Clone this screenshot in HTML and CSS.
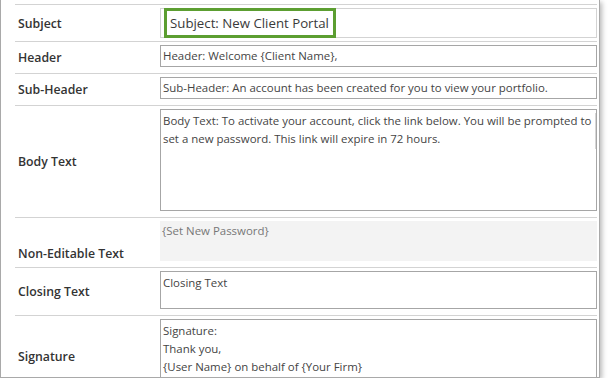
FILE: index.html
```html
<!DOCTYPE html>
<html lang="en">

<head>
	<meta charset="UTF-8">
	<title>Email Template</title>
	<link rel="stylesheet" href="styles.css">
</head>

<body>

	<div class="frame">
		<div class="form">
			<div class="row row-subject">
				<div class="label">Subject</div>
				<div class="field">
					<div class="box box-subject"><span class="highlight">Subject: New Client Portal</span></div>
				</div>
			</div>
			<div class="row">
				<div class="label">Header</div>
				<div class="field">
					<div class="box box-line">Header: Welcome {Client Name},</div>
				</div>
			</div>
			<div class="row">
				<div class="label">Sub-Header</div>
				<div class="field">
					<div class="box box-line">Sub-Header: An account has been created for you to view your portfolio.</div>
				</div>
			</div>
			<div class="row">
				<div class="label">Body Text</div>
				<div class="field">
					<div class="box box-body">Body Text: To activate your account, click the link below. You will be prompted to set a new password. This link will expire in 72 hours.<span class="scroll"></span></div>
				</div>
			</div>
			<div class="row">
				<div class="label label-bottom">Non-Editable Text</div>
				<div class="field">
					<div class="readonly">{Set New Password}</div>
				</div>
			</div>
			<div class="row">
				<div class="label">Closing Text</div>
				<div class="field">
					<div class="box box-closing">Closing Text</div>
				</div>
			</div>
			<div class="row">
				<div class="label">Signature</div>
				<div class="field">
					<div class="box box-signature">Signature:<br>Thank you,<br>{User Name} on behalf of {Your Firm}</div>
				</div>
			</div>
		</div>
	</div>

</body>

</html>
```

FILE: styles.css
```css
* {
	margin: 0;
	padding: 0;
	box-sizing: border-box;
}

body {
	background: #fff;
	font-family: "Open Sans", "Noto Sans", sans-serif;
	color: #444;
}

.frame {
	width: 600px;
	height: 378px;
	border: 1px solid #a9a9a9;
	border-top: none;
	box-shadow: 2px 2px 5px rgba(0, 0, 0, 0.28);
	overflow: hidden;
}

.form {
	margin: 4px 2px 0 14px;
}

.row {
	display: grid;
	grid-template-columns: 145px 1fr;
	border-top: 1px solid #d3d3d3;
}

.label {
	display: flex;
	align-items: center;
	padding-left: 3px;
	font-size: 12.3px;
	font-weight: 600;
	color: #333;
}

.label-bottom {
	align-items: flex-end;
	padding-bottom: 5px;
}

.field {
	padding: 3px 0 6px;
}

.row-subject .field {
	padding-bottom: 3px;
}

.box {
	position: relative;
	border: 1px solid #a6a6a6;
	padding: 2px 2px;
	font-size: 11.45px;
	line-height: 18px;
	color: #444;
	background: #fff;
}

.box-subject {
	height: 30px;
	padding: 0;
	border-color: #d3d3d3;
}

.highlight {
	display: inline-block;
	height: 30px;
	margin: -1px 0 -1px 3px;
	padding: 0 4px 0 3px;
	border: 3px solid #5c9e31;
	font-size: 13.25px;
	line-height: 24px;
	color: #3a3a3a;
}

.box-line {
	height: 22px;
	padding-top: 1px;
}

.box-body {
	height: 102px;
}

.scroll {
	position: absolute;
	top: 3px;
	right: 0;
	width: 1px;
	height: 36px;
	background: #d6d6d6;
}

.readonly {
	height: 40px;
	padding: 1px 2px;
	background: #f3f3f3;
	font-size: 11.45px;
	line-height: 18px;
	color: #777;
}

.box-closing {
	height: 38px;
}

.box-signature {
	height: 72px;
}
```
